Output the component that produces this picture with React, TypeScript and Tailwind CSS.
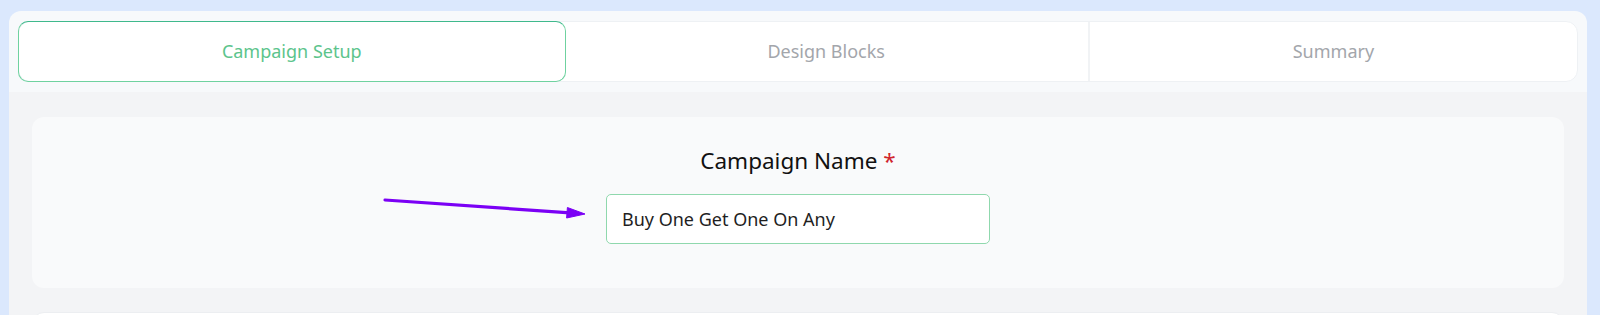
import React from "react";

export default function App() {
  const font = { fontFamily: '"Noto Sans", "Open Sans", sans-serif' };
  return (
    <div className="min-h-[315px] bg-[#dbe8fd] pt-[11px] pl-[9px] pr-[13px]" style={font}>
      <div className="rounded-t-[12px] bg-[#f7f9fb] overflow-hidden">
        <div className="px-[9px] pt-[10px] pb-[10px]">
          <div className="flex h-[61px] rounded-[12px] bg-white border border-[#eef1f4]">
            <div className="flex-auto flex items-center justify-center rounded-[10px] border border-[#6fd2a0] border-t-[#3fb98c] -m-px text-[18px] text-[#5cc48c]">
              Campaign Setup
            </div>
            <div className="flex-auto flex items-center justify-center text-[18px] text-[#a3a6ab]">
              Design Blocks
            </div>
            <div className="flex-auto flex items-center justify-center border-l-2 border-[#f1f3f5] text-[18px] text-[#a3a6ab]">
              Summary
            </div>
          </div>
        </div>
        <div className="bg-[#f3f4f6] px-[23px] pt-[25px] h-[223px]">
          <div className="relative rounded-[12px] bg-[#f9fafb] h-[171px] flex flex-col items-center pt-[28px]">
            <div className="text-[22.5px] leading-[31px] text-[#111111]">
              Campaign Name <span className="text-[#d0242b]">*</span>
            </div>
            <div className="mt-[18px] w-[384px] h-[50px] rounded-[5px] border border-[#8fd8ad] bg-white flex items-center px-[15px] text-[18px] text-[#1f1f1f]">
              Buy One Get One On Any
            </div>
            <svg
              className="absolute left-[350px] top-[75px]"
              width="240"
              height="32"
              viewBox="0 0 240 32"
            >
              <line x1="3" y1="8" x2="188" y2="20.9" stroke="#7b00f5" strokeWidth="3.2" strokeLinecap="round" />
              <polygon points="203,22 184.6,26 185.4,15.5" fill="#7b00f5" stroke="#7b00f5" strokeWidth="1" strokeLinejoin="round" />
            </svg>
          </div>
          <div className="mt-[24px] h-[20px] rounded-t-[12px] bg-white border border-[#eceef1]" />
        </div>
      </div>
    </div>
  );
}
